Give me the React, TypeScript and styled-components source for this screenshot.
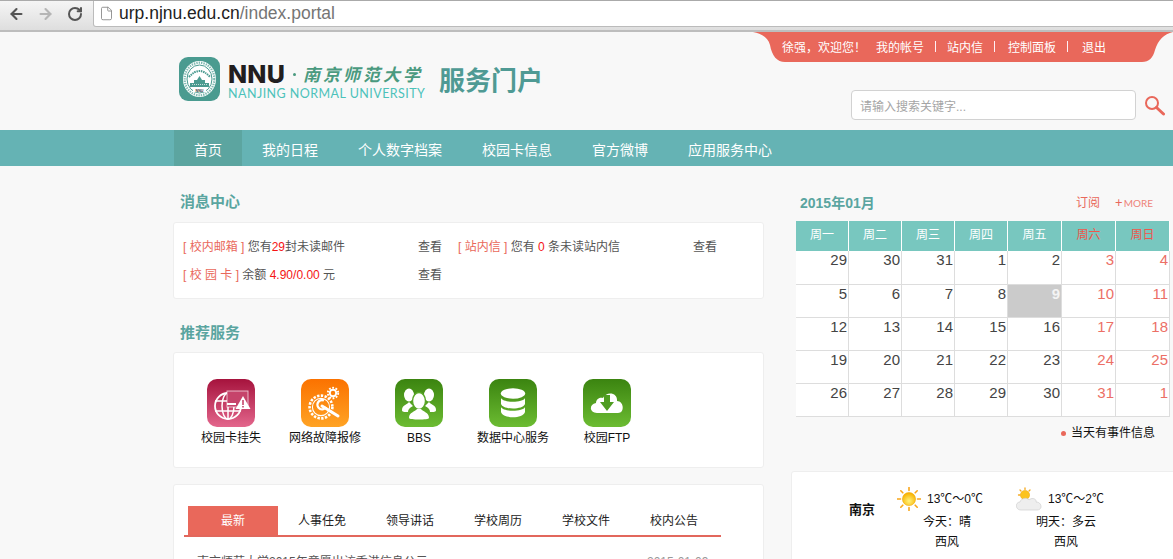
import React from "react";
import styled, { createGlobalStyle } from "styled-components";
import { ArrowLeft, ArrowRight, RotateCw, File } from "lucide-react";

const GlobalStyle = createGlobalStyle`
  html, body {
    margin: 0;
    padding: 0;
    height: 100%;
    overflow: hidden;
    background: #f8f8f8;
  }
  body {
    font-family: "Liberation Sans", "Noto Sans CJK SC", sans-serif;
    font-size: 12px;
    color: #555;
  }
  * { box-sizing: border-box; }
`;

const RED = "#e9685b";
const TEAL_TITLE = "#5aa5a0";

const Page = styled.div`
  width: 1173px;
  height: 559px;
  overflow: hidden;
`;

const BrowserBar = styled.div`
  height: 32px;
  display: flex;
  align-items: flex-start;
  padding-left: 8px;
  background: linear-gradient(#f5f5f5, #dedede);
  border-top: 1px solid #aaa;
  border-bottom: 2px solid #bdbdbd;
  overflow: hidden;
`;

const NavButton = styled.span<{ $gap: number; $color: string }>`
  display: flex;
  width: 17px;
  height: 25px;
  align-items: center;
  justify-content: center;
  margin-right: ${(p) => p.$gap}px;
  color: ${(p) => p.$color};
`;

const UrlBox = styled.div`
  flex: 1;
  height: 26px;
  margin-right: -6px;
  display: flex;
  align-items: center;
  gap: 5px;
  padding-left: 5px;
  background: #fff;
  border: 1px solid #bbb;
  border-top: 0;
  border-radius: 0 0 0 3px;
  color: #777;
`;

const UrlText = styled.span`
  font-size: 17.5px;
  color: #757575;
  b {
    font-weight: 400;
    color: #222;
  }
`;

const Header = styled.header`
  height: 98px;
  display: flex;
  justify-content: space-between;
`;

const Logo = styled.div`
  display: flex;
  align-items: flex-start;
  padding: 25px 0 0 179px;
`;

const LogoText = styled.div`
  width: 197px;
  flex: none;
  margin-left: 8px;
  display: flex;
  flex-direction: column;
`;

const LogoTop = styled.div`
  height: 26px;
  margin-top: 4px;
  display: flex;
  align-items: center;
  white-space: nowrap;
  line-height: 20px;
`;

const NnuMark = styled.span`
  font-family: Inter, "Liberation Sans", sans-serif;
  font-size: 25px;
  font-weight: 800;
  letter-spacing: 0.2px;
  color: #221e1f;
`;

const LogoDot = styled.i`
  width: 3px;
  height: 3px;
  margin: 0 7px 0 8px;
  border-radius: 50%;
  background: #4a9a7f;
`;

const CnMark = styled.span`
  font-family: "Noto Sans CJK SC", sans-serif;
  font-size: 17px;
  font-weight: 700;
  font-style: italic;
  letter-spacing: 3px;
  color: #4a9a7f;
`;

const EnMark = styled.span`
  font-family: Lato, sans-serif;
  font-size: 12.5px;
  line-height: 14px;
  letter-spacing: 0.45px;
  white-space: nowrap;
  color: #4cc2ba;
`;

const PortalTitle = styled.div`
  margin: 4px 0 0 14px;
  font-family: "Noto Sans CJK SC", sans-serif;
  font-size: 26px;
  line-height: 36px;
  font-weight: 700;
  color: #4f9a94;
`;

const HeaderRight = styled.div`
  width: 420px;
  display: flex;
  flex-direction: column;
  align-items: flex-end;
`;

const UserTab = styled.div`
  width: 420px;
  height: 30px;
  display: flex;
  align-items: center;
  padding: 0 0 2px 29px;
  color: #fff;
  background: ${RED};
  clip-path: path("M0 0 C10 2 15 6 17 13 C19 24 24 30 32 30 L389 30 C396 30 400 26 402 18 C405 8 411 2 420 0 Z");
  white-space: nowrap;
`;

const Welcome = styled.span`
  width: 94px;
`;

const TabSep = styled.span<{ $after: number }>`
  width: 1px;
  height: 11px;
  margin: 0 ${(p) => p.$after}px 0 11px;
  background: #fff0f5;
`;

const SearchRow = styled.div`
  margin: 28px 8px 0 0;
  display: flex;
  align-items: center;
  gap: 8px;
`;

const SearchBox = styled.div`
  width: 285px;
  height: 30px;
  display: flex;
  align-items: center;
  padding-left: 8px;
  background: #fff;
  border: 1px solid #d2d2d2;
  border-radius: 4px;
  color: #a5a5a5;
`;

const MainNav = styled.nav`
  height: 36px;
  display: flex;
  padding-left: 174px;
  background: #65b3b4;
`;

const NavItem = styled.a<{ $active?: boolean }>`
  padding: 0 20px;
  font-size: 14px;
  line-height: 40px;
  color: #fff;
  background: ${(p) => (p.$active ? "#5ca5a0" : "transparent")};
`;

const Main = styled.main`
  display: flex;
  padding-left: 173px;
`;

const LeftCol = styled.div`
  width: 591px;
  flex: none;
`;

const RightCol = styled.div`
  width: 400px;
  flex: none;
  margin-left: 27px;
`;

const SectionTitle = styled.h2<{ $h: number; $top: number }>`
  margin: 0;
  height: ${(p) => p.$h}px;
  padding: ${(p) => p.$top}px 0 0 7px;
  font-size: 15px;
  line-height: 18px;
  font-weight: 700;
  color: ${TEAL_TITLE};
`;

const Card = styled.section`
  background: #fff;
  border: 1px solid #eee;
  border-radius: 3px;
`;

const MessageGrid = styled(Card)`
  height: 77px;
  display: grid;
  grid-template-columns: 235px 40px 235px auto;
  grid-auto-rows: 28px;
  align-items: center;
  padding: 8px 0 0 9px;
`;

const Tag = styled.span`
  color: ${RED};
`;

const Num = styled.span`
  color: #f51414;
`;

const ServiceCard = styled(Card)`
  height: 116px;
  margin-bottom: 16px;
  display: flex;
  padding: 26px 0 0 10px;
`;

const ServiceItem = styled.div`
  width: 94px;
  display: flex;
  flex-direction: column;
  align-items: center;
  gap: 3px;
  color: #111;
  line-height: 16px;
  white-space: nowrap;
`;

const ServiceIcon = styled.div<{ $from: string; $to: string }>`
  width: 48px;
  height: 48px;
  border-radius: 10px;
  background: linear-gradient(${(p) => p.$from}, ${(p) => p.$to});
  svg {
    display: block;
  }
`;

const NewsCard = styled(Card)`
  height: 120px;
  padding: 21px 42px 0 10px;
`;

const Tabs = styled.div`
  height: 31px;
  display: flex;
  padding-left: 4px;
  border-bottom: 2px solid #e2675c;
`;

const TabItem = styled.a<{ $active?: boolean }>`
  width: ${(p) => (p.$active ? 90 : 88)}px;
  text-align: center;
  line-height: 31px;
  color: ${(p) => (p.$active ? "#fff" : "#222")};
  background: ${(p) => (p.$active ? "#e9685b" : "transparent")};
`;

const NewsRow = styled.div`
  display: flex;
  align-items: center;
  padding: 17px 0 0 4px;
  line-height: 16px;
  color: #555;
`;

const Bullet = styled.i`
  width: 3px;
  height: 3px;
  margin-right: 6px;
  border-radius: 50%;
  background: ${RED};
`;

const NewsTitle = styled.span`
  width: 450px;
`;

const NewsDate = styled.span`
  color: #999;
`;

const CalendarHead = styled.div`
  height: 55px;
  width: 374px;
  margin-left: 5px;
  display: flex;
  align-items: center;
  padding: 16px 17px 0 4px;
`;

const CalendarTitle = styled.h3`
  flex: 1;
  margin: 0;
  font-size: 14px;
  font-weight: 700;
  color: ${TEAL_TITLE};
`;

const Subscribe = styled.a`
  margin-right: 15px;
  color: ${RED};
`;

const More = styled.a`
  font-family: Lato, sans-serif;
  font-size: 10px;
  color: #ee8378;
  b {
    font-size: 13px;
    font-weight: 400;
    color: ${RED};
    margin-right: 1px;
  }
`;

const CalendarGrid = styled.div`
  width: 374px;
  margin-left: 5px;
  display: grid;
  grid-template-columns: 53px 53px 53px 53px 54px 54px 54px;
  grid-template-rows: 30px 34px repeat(4, 33px);
  background: #fff;
`;

const WeekCell = styled.div<{ $weekend?: boolean }>`
  text-align: center;
  line-height: 29px;
  background: #78c7bf;
  border-right: 1px solid #fff;
  color: ${(p) => (p.$weekend ? "#f0564b" : "#fff")};
`;

const DayCell = styled.div<{ $weekend?: boolean; $today?: boolean }>`
  padding: 0 1px 0 0;
  text-align: right;
  font-size: 15px;
  line-height: 18px;
  border-right: 1px solid #ddd;
  border-bottom: 1px solid #ddd;
  color: ${(p) => (p.$today ? "#f4f4f4" : p.$weekend ? "#ec6f66" : "#444")};
  background: ${(p) => (p.$today ? "#cbcbcb" : "#fff")};
  font-weight: ${(p) => (p.$today ? 700 : 400)};
`;

const Legend = styled.div`
  width: 364px;
  height: 54px;
  display: flex;
  justify-content: flex-end;
  align-items: flex-start;
  gap: 5px;
  padding-top: 8px;
  line-height: 16px;
  color: #111;
`;

const LegendDot = styled.i`
  width: 5px;
  height: 5px;
  margin-top: 6px;
  border-radius: 50%;
  background: ${RED};
`;

const WeatherCard = styled(Card)`
  height: 110px;
  display: flex;
  padding: 14px 0 0 57px;
  color: #111;
`;

const City = styled.strong`
  width: 48px;
  margin-top: 16px;
  font-size: 13px;
  line-height: 16px;
`;

const Forecast = styled.div`
  width: 100px;
  margin-right: 19px;
  text-align: center;
  line-height: 20px;
`;

const ForecastTop = styled.div`
  height: 26px;
  display: flex;
  align-items: center;
  gap: 6px;
  white-space: nowrap;
  svg {
    flex: none;
  }
`;

const SealIcon = () => (
  <svg width="41" height="44" viewBox="0 0 41 44">
    <rect width="41" height="44" rx="9" fill="#4a9b90" />
    <ellipse cx="20.5" cy="22" rx="16.5" ry="18" fill="#fff" />
    <ellipse cx="20.5" cy="22" rx="12.5" ry="14" fill="none" stroke="#4a9b90" strokeWidth="1" />
    <ellipse cx="20.5" cy="22" rx="14.8" ry="16.3" fill="none" stroke="#7fb9b1" strokeWidth="2.2" strokeDasharray="1.4 1" />
    <path d="M10 20 Q20.5 8 31 20" fill="none" stroke="#4a9b90" strokeWidth="2" strokeDasharray="1.5 .8" />
    <path d="M11 30 V26 H15 V23 H18 L20.5 19 L23 23 H26 V26 H30 V30 Z" fill="#4a9b90" />
    <path d="M13 27.5 H28" stroke="#fff" strokeWidth=".7" strokeDasharray="1 1" />
    <rect x="14" y="31.5" width="13" height="3.6" fill="#fff" />
    <text x="20.5" y="34.8" textAnchor="middle" fontSize="3.6" fontWeight="700" fill="#333" fontFamily="Liberation Sans">
      NNU
    </text>
  </svg>
);

const MagnifierIcon = () => (
  <svg width="21" height="21" viewBox="0 0 21 21" fill="none" stroke={RED}>
    <circle cx="8" cy="8" r="6" strokeWidth="2" />
    <path d="M12.5 12.5 L19.5 19" strokeWidth="3" strokeLinecap="round" />
  </svg>
);

const CardLossIcon = () => (
  <svg width="48" height="48" viewBox="0 0 48 48" fill="none" stroke="#fff">
    <circle cx="21" cy="27" r="13" strokeWidth="1.8" />
    <ellipse cx="21" cy="27" rx="6" ry="13" strokeWidth="1.5" />
    <path d="M8 22 H34 M8 32 H34 M21 14 V40" strokeWidth="1.5" />
    <rect x="20" y="12" width="21" height="16" fill="#c6446b" strokeWidth="1" strokeOpacity=".65" />
    <path d="M20 25 H29" strokeWidth="2" />
    <path d="M36 17 L43.5 30 H28.5 Z" fill="#fff" stroke="none" />
    <path d="M36 21 V26 M36 27 V28.6" stroke="#c6446b" strokeWidth="1.6" />
  </svg>
);

const GearRepairIcon = () => (
  <svg width="48" height="48" viewBox="0 0 48 48" fill="none" stroke="#fff">
    <circle cx="20" cy="28" r="11.4" strokeWidth="2.6" strokeDasharray="2.4 1.4" />
    <circle cx="20" cy="28" r="8.6" strokeWidth="1.1" />
    <path d="M23 21.5 A4.6 4.6 0 1 0 25 28" strokeWidth="2.4" />
    <path d="M21 27 L37 37" strokeWidth="3" strokeLinecap="round" />
    <circle cx="32" cy="14" r="3.2" strokeWidth="1.9" />
    <circle cx="32" cy="14" r="5.2" strokeWidth="1.9" strokeDasharray="1.8 1.5" />
  </svg>
);

const PeopleIcon = () => (
  <svg width="48" height="48" viewBox="0 0 48 48" fill="#fff">
    <ellipse cx="14" cy="16" rx="5" ry="6.5" />
    <path d="M7 31 C7 26 12 26 14 23 L18 27 C14 29 13 31 13 33 C9 33 7 33 7 31 Z" />
    <ellipse cx="34" cy="16" rx="5" ry="6.5" />
    <path d="M41 31 C41 26 36 26 34 23 L30 27 C34 29 35 31 35 33 C39 33 41 33 41 31 Z" />
    <ellipse cx="24" cy="22" rx="6.5" ry="8.5" stroke="#57a626" strokeWidth="1.4" />
    <path d="M14 39 C14 33 20 33 22 30 H26 C28 33 34 33 34 39 C34 41 14 41 14 39 Z" />
  </svg>
);

const DatabaseIcon = () => (
  <svg width="48" height="48" viewBox="0 0 48 48" fill="#fff">
    <ellipse cx="24" cy="14.5" rx="12.2" ry="5.2" />
    <path d="M12 19 C14 24 34 24 36 19 V25 C34 31 14 31 12 25 Z" />
    <path d="M12 28 C14 33 34 33 36 28 V33 C34 40 14 40 12 33 Z" />
  </svg>
);

const CloudDownIcon = () => (
  <svg width="48" height="48" viewBox="0 0 48 48" fill="#fff">
    <path d="M14 34 C6 34 6 25 13 24 C13 19 18 18 20 19 C23 12 35 13 34 22 C41 22 42 34 35 34 Z" />
    <path d="M21 16 H27 V23 H31 L24 32 L17 23 H21 Z" fill="#4f9d22" />
  </svg>
);

const SunIcon = () => (
  <svg width="24" height="24" viewBox="0 0 24 24">
    <defs>
      <radialGradient id="sunFill" cx="50%" cy="65%" r="60%">
        <stop offset="0" stopColor="#fff27a" />
        <stop offset="1" stopColor="#f8b200" />
      </radialGradient>
    </defs>
    <circle cx="12" cy="12" r="6.6" fill="url(#sunFill)" stroke="#eea400" strokeWidth=".5" />
    <path
      d="M12 0.5 V3.5 M12 20.5 V23.5 M0.5 12 H3.5 M20.5 12 H23.5 M3.8 3.8 L5.8 5.8 M18.2 18.2 L20.2 20.2 M20.2 3.8 L18.2 5.8 M5.8 18.2 L3.8 20.2"
      stroke="#f9a61a"
      strokeWidth="1.6"
      strokeLinecap="round"
    />
  </svg>
);

const CloudSunIcon = () => (
  <svg width="26" height="24" viewBox="0 0 26 24">
    <circle cx="9" cy="8" r="4.6" fill="#fcc31e" stroke="#ed9f00" strokeWidth=".5" />
    <path d="M9 1 V2.4 M2.5 8 H3.8 M4 3 L5 4 M14 3 L13 4" stroke="#f5a81c" strokeWidth="1.3" strokeLinecap="round" />
    <path
      d="M5 23 C-1 23 -1 15 4 15 C5 11 11 10 13 13 C16 10 21 12 20 15 C26 15 27 23 21 23 Z"
      fill="#eeeeee"
      stroke="#cfcfcf"
      strokeWidth=".7"
    />
  </svg>
);

const services = [
  { name: "校园卡挂失", from: "#a6133d", to: "#e3668c", icon: <CardLossIcon /> },
  { name: "网络故障报修", from: "#fb7200", to: "#ffa324", icon: <GearRepairIcon /> },
  { name: "BBS", from: "#3b8410", to: "#6cbc32", icon: <PeopleIcon /> },
  { name: "数据中心服务", from: "#3b8410", to: "#6cbc32", icon: <DatabaseIcon /> },
  { name: "校园FTP", from: "#3b8410", to: "#6cbc32", icon: <CloudDownIcon /> },
];

const navItems = ["首页", "我的日程", "个人数字档案", "校园卡信息", "官方微博", "应用服务中心"];
const newsTabs = ["最新", "人事任免", "领导讲话", "学校周历", "学校文件", "校内公告"];
const weekDays = ["周一", "周二", "周三", "周四", "周五", "周六", "周日"];
const days = [
  29, 30, 31, 1, 2, 3, 4, 5, 6, 7, 8, 9, 10, 11, 12, 13, 14, 15, 16, 17, 18, 19, 20, 21, 22, 23, 24, 25, 26, 27, 28,
  29, 30, 31, 1,
];

export default function App() {
  return (
    <Page>
      <GlobalStyle />
      <BrowserBar>
        <NavButton $gap={12} $color="#555">
          <ArrowLeft size={18} strokeWidth={3} />
        </NavButton>
        <NavButton $gap={12} $color="#b5b5b5">
          <ArrowRight size={18} strokeWidth={3} />
        </NavButton>
        <NavButton $gap={10} $color="#555">
          <RotateCw size={16} strokeWidth={3} />
        </NavButton>
        <UrlBox>
          <File size={15} strokeWidth={1.4} color="#888" />
          <UrlText>
            <b>urp.njnu.edu.cn</b>/index.portal
          </UrlText>
        </UrlBox>
      </BrowserBar>

      <Header>
        <Logo>
          <SealIcon />
          <LogoText>
            <LogoTop>
              <NnuMark>NNU</NnuMark>
              <LogoDot />
              <CnMark>南京师范大学</CnMark>
            </LogoTop>
            <EnMark>NANJING NORMAL UNIVERSITY</EnMark>
          </LogoText>
          <PortalTitle>服务门户</PortalTitle>
        </Logo>
        <HeaderRight>
          <UserTab>
            <Welcome>徐强，欢迎您！</Welcome>
            <span>我的帐号</span>
            <TabSep $after={11} />
            <span>站内信</span>
            <TabSep $after={13} />
            <span>控制面板</span>
            <TabSep $after={14} />
            <span>退出</span>
          </UserTab>
          <SearchRow>
            <SearchBox>请输入搜索关键字...</SearchBox>
            <MagnifierIcon />
          </SearchRow>
        </HeaderRight>
      </Header>

      <MainNav>
        {navItems.map((item, i) => (
          <NavItem key={item} $active={i === 0}>
            {item}
          </NavItem>
        ))}
      </MainNav>

      <Main>
        <LeftCol>
          <SectionTitle $h={56} $top={27}>
            消息中心
          </SectionTitle>
          <MessageGrid>
            <span>
              <Tag>[ 校内邮箱 ]</Tag> 您有<Num>29</Num>封未读邮件
            </span>
            <span>查看</span>
            <span>
              <Tag>[ 站内信 ]</Tag> 您有 <Num>0</Num> 条未读站内信
            </span>
            <span>查看</span>
            <span>
              <Tag>[ 校 园 卡 ]</Tag> 余额 <Num>4.90/0.00</Num> 元
            </span>
            <span>查看</span>
          </MessageGrid>

          <SectionTitle $h={53} $top={25}>
            推荐服务
          </SectionTitle>
          <ServiceCard>
            {services.map((s) => (
              <ServiceItem key={s.name}>
                <ServiceIcon $from={s.from} $to={s.to}>
                  {s.icon}
                </ServiceIcon>
                {s.name}
              </ServiceItem>
            ))}
          </ServiceCard>

          <NewsCard>
            <Tabs>
              {newsTabs.map((t, i) => (
                <TabItem key={t} $active={i === 0}>
                  {t}
                </TabItem>
              ))}
            </Tabs>
            <NewsRow>
              <Bullet />
              <NewsTitle>南京师范大学2015年意愿出访香港信息公示</NewsTitle>
              <NewsDate>2015-01-09</NewsDate>
            </NewsRow>
          </NewsCard>
        </LeftCol>

        <RightCol>
          <CalendarHead>
            <CalendarTitle>2015年01月</CalendarTitle>
            <Subscribe>订阅</Subscribe>
            <More>
              <b>+</b>MORE
            </More>
          </CalendarHead>
          <CalendarGrid>
            {weekDays.map((d, i) => (
              <WeekCell key={d} $weekend={i > 4}>
                {d}
              </WeekCell>
            ))}
            {days.map((d, i) => (
              <DayCell key={i} $weekend={i % 7 > 4} $today={i === 11}>
                {d}
              </DayCell>
            ))}
          </CalendarGrid>
          <Legend>
            <LegendDot />
            当天有事件信息
          </Legend>
          <WeatherCard>
            <City>南京</City>
            <Forecast>
              <ForecastTop>
                <SunIcon />
                13℃～0℃
              </ForecastTop>
              <div>今天：晴</div>
              <div>西风</div>
            </Forecast>
            <Forecast>
              <ForecastTop>
                <CloudSunIcon />
                13℃～2℃
              </ForecastTop>
              <div>明天：多云</div>
              <div>西风</div>
            </Forecast>
          </WeatherCard>
        </RightCol>
      </Main>
    </Page>
  );
}
